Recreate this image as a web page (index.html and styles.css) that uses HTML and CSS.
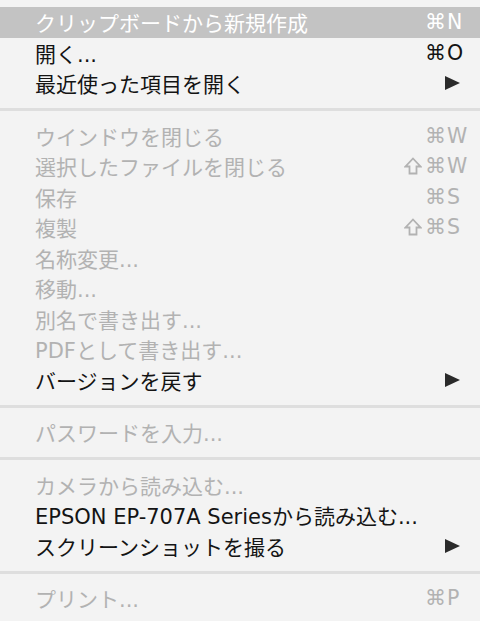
FILE: index.html
```html
<!DOCTYPE html>
<html lang="ja">
<head>
<meta charset="utf-8">
<link rel="stylesheet" href="styles.css">
</head>
<body>
<div class="menu">
  <div class="item active"><span class="label">クリップボードから新規作成</span><span class="keys"><span class="mod">⌘</span><span class="key">N</span></span></div>
  <div class="item"><span class="label">開く...</span><span class="keys"><span class="mod">⌘</span><span class="key">O</span></span></div>
  <div class="item"><span class="label">最近使った項目を開く</span><span class="arrow"></span></div>
  <div class="sep"></div>
  <div class="item disabled"><span class="label">ウインドウを閉じる</span><span class="keys"><span class="mod">⌘</span><span class="key">W</span></span></div>
  <div class="item disabled"><span class="label">選択したファイルを閉じる</span><span class="keys"><svg class="shift" viewBox="0 0 18 18" width="18" height="18"><path d="M9 1.5 L16.5 9.5 H12.5 V16.5 H5.5 V9.5 H1.5 Z" fill="none" stroke="currentColor" stroke-width="1.8" stroke-linejoin="miter"/></svg><span class="mod">⌘</span><span class="key">W</span></span></div>
  <div class="item disabled"><span class="label">保存</span><span class="keys"><span class="mod">⌘</span><span class="key">S</span></span></div>
  <div class="item disabled"><span class="label">複製</span><span class="keys"><svg class="shift" viewBox="0 0 18 18" width="18" height="18"><path d="M9 1.5 L16.5 9.5 H12.5 V16.5 H5.5 V9.5 H1.5 Z" fill="none" stroke="currentColor" stroke-width="1.8" stroke-linejoin="miter"/></svg><span class="mod">⌘</span><span class="key">S</span></span></div>
  <div class="item disabled"><span class="label">名称変更...</span></div>
  <div class="item disabled"><span class="label">移動...</span></div>
  <div class="item disabled"><span class="label">別名で書き出す...</span></div>
  <div class="item disabled"><span class="label">PDFとして書き出す...</span></div>
  <div class="item"><span class="label">バージョンを戻す</span><span class="arrow"></span></div>
  <div class="sep"></div>
  <div class="item disabled"><span class="label">パスワードを入力...</span></div>
  <div class="sep"></div>
  <div class="item disabled"><span class="label">カメラから読み込む...</span></div>
  <div class="item"><span class="label">EPSON EP-707A Seriesから読み込む...</span></div>
  <div class="item"><span class="label">スクリーンショットを撮る</span><span class="arrow"></span></div>
  <div class="sep"></div>
  <div class="item disabled"><span class="label">プリント...</span><span class="keys"><span class="mod">⌘</span><span class="key">P</span></span></div>
</div>
</body>
</html>
```

FILE: styles.css
```css
html, body {
  margin: 0;
  padding: 0;
  background: #f3f3f3;
}
.menu {
  width: 480px;
  height: 621px;
  box-sizing: border-box;
  padding-top: 7px;
  background: #f3f3f3;
  font-family: "DejaVu Sans", "Noto Sans CJK JP", sans-serif;
  font-size: 21px;
  color: #141414;
}
.item {
  height: 30.5px;
  display: flex;
  align-items: center;
  padding: 0 10px 0 35px;
  white-space: nowrap;
}
.item.active {
  background: #c3c3c3;
  color: #ffffff;
}
.item.disabled {
  color: #b2b2b2;
}
.label {
  flex: 1;
}
.keys {
  display: flex;
  align-items: center;
  font-family: "DejaVu Sans", sans-serif;
  font-size: 21px;
}
.shift {
  display: block;
  margin-right: 3px;
}
.mod {
  text-align: right;
}
.key {
  width: 23px;
  margin-left: 1px;
  font-size: 20.5px;
  text-align: left;
}
.arrow {
  width: 0;
  height: 0;
  border-top: 7px solid transparent;
  border-bottom: 7px solid transparent;
  border-left: 15px solid #2a2a2a;
  margin-right: 10px;
}
.sep {
  height: 22px;
  display: flex;
  align-items: center;
}
.sep::before {
  content: "";
  display: block;
  width: 100%;
  height: 3px;
  background: #dedede;
}
```
